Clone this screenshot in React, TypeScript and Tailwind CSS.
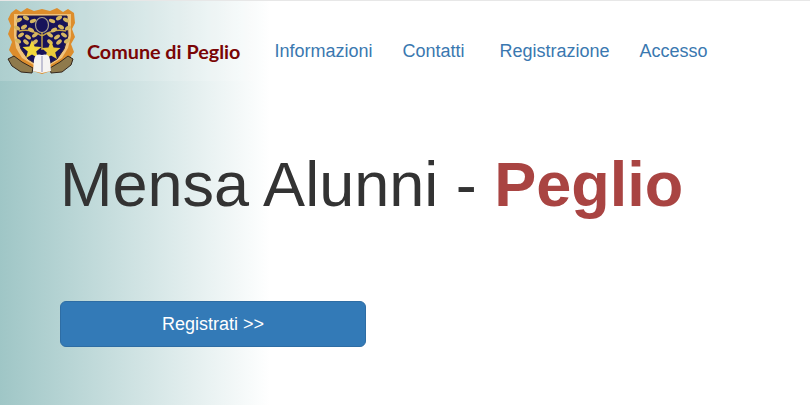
const leaves: number[][] = [
  [13, 14, -30], [20, 12, 30], [27, 15, -20], [46, 15, 20], [53, 12, -30], [60, 14, 30],
  [11, 22, 30], [18, 21, -30], [25, 24, 30], [48, 24, -30], [55, 21, 30], [62, 22, -30],
  [15, 29, -35], [22, 31, 35], [29, 29, -35], [44, 29, 35], [51, 31, -35], [58, 29, 35],
  [20, 36, 40], [29, 36, -40], [44, 36, 40], [53, 36, -40], [12, 35, 30], [61, 35, -30],
];

const Crest = () => (
  <svg width="70" height="70" viewBox="0 0 70 70" className="shrink-0">
    {/* orange mantling */}
    <path d="M5 7 L10 3 L15 6 L21 2 L28 5 L36 3 L44 5 L51 2 L57 6 L62 3 L68 7 L69 17 L66 23 L69 31 L65 38 L68 46 L64 52 L60 60 L36 68 L12 60 L7 50 L3 44 L6 36 L2 28 L5 20 L2 13 Z" fill="#dd8d2c" />
    <path d="M8 8 L65 8 L65 30 L62 42 L56 52 L36 64 L16 52 L10 42 L8 30 Z" fill="#f0c27a" />
    {/* shield */}
    <path d="M12 10 L61 10 L62 30 L58 43 L51 53 L36 62 L22 53 L15 43 L11 30 Z" fill="#17135a" stroke="#2c2140" strokeWidth="1" />
    {/* tree */}
    <ellipse cx="36" cy="19" rx="6.5" ry="7.5" fill="none" stroke="#a9a08c" strokeWidth="1.2" />
    <path d="M36 26 L36 44 M36 30 Q24 22 13 25 M36 30 Q48 22 60 25" stroke="#c8a646" strokeWidth="1.4" fill="none" />
    <g fill="#d6b761">
      {leaves.map(([x, y, r], i) => (
        <ellipse key={i} cx={x} cy={y} rx="3.3" ry="1.9" transform={`rotate(${r} ${x} ${y})`} />
      ))}
    </g>
    {/* stars */}
    <path d="M26 34 L28.6 40.6 L35.5 41 L30.2 45.4 L32 52 L26 48.4 L20 52 L21.8 45.4 L16.5 41 L23.4 40.6 Z" fill="#f2d83c" />
    <path d="M45 35 L47.6 41.6 L54.5 42 L49.2 46.4 L51 53 L45 49.4 L39 53 L40.8 46.4 L35.5 42 L42.4 41.6 Z" fill="#e9c93a" />
    {/* motto ribbon */}
    <path d="M2 53 L8 50 L16 56 L27 62 L26 67 L15 66 L6 60 Z" fill="#8f7a4c" stroke="#33261c" strokeWidth="1" />
    <path d="M67 53 L62 50 L54 56 L44 62 L45 67 L56 66 L65 59 Z" fill="#8f7a4c" stroke="#33261c" strokeWidth="1" />
    {/* book */}
    <path d="M28 54 Q29 47 36 49 Q43 47 44 54 L45 65 L36 67 L27 65 Z" fill="#f5f4f2" />
    <path d="M36 50 L36 66" stroke="#8d8fb5" strokeWidth="1" />
  </svg>
);

const links = [
  { label: "Informazioni", className: "mr-[30px]" },
  { label: "Contatti", className: "mr-[35px]" },
  { label: "Registrazione", className: "mr-[30px]" },
  { label: "Accesso", className: "" },
];

export default function App() {
  return (
    <div
      className="w-[810px] h-[405px] overflow-hidden border-t border-[#e7e7e7] bg-[linear-gradient(to_right,#9fc6c6_0px,#ffffff_270px)]"
      style={{ fontFamily: '"Liberation Sans", Arial, sans-serif' }}
    >
      <nav className="h-[80px] flex items-center bg-white/15">
        <div className="ml-[6px] flex items-center">
          <Crest />
          <span className="ml-[11px] mt-[21px] text-[19.75px] font-bold text-[#7a0505] font-['Lato',sans-serif]">Comune di Peglio</span>
        </div>
        <ul className="ml-[34px] mt-[21px] flex items-center">
          {links.map((link) => (
            <li key={link.label} className={link.className}>
              <a href="#" className="text-[18px] text-[#3a78b0]">{link.label}</a>
            </li>
          ))}
        </ul>
      </nav>
      <main className="pl-[60px]">
        <h1 className="mt-[69px] text-[63px] leading-[69px] text-[#333333]">
          Mensa Alunni - <strong className="text-[#a94442]">Peglio</strong>
        </h1>
        <button className="mt-[82px] block w-[306px] h-[46px] rounded-[6px] border border-[#2e6da4] bg-[#337ab7] text-[18px] text-white">
          Registrati &gt;&gt;
        </button>
      </main>
    </div>
  );
}
